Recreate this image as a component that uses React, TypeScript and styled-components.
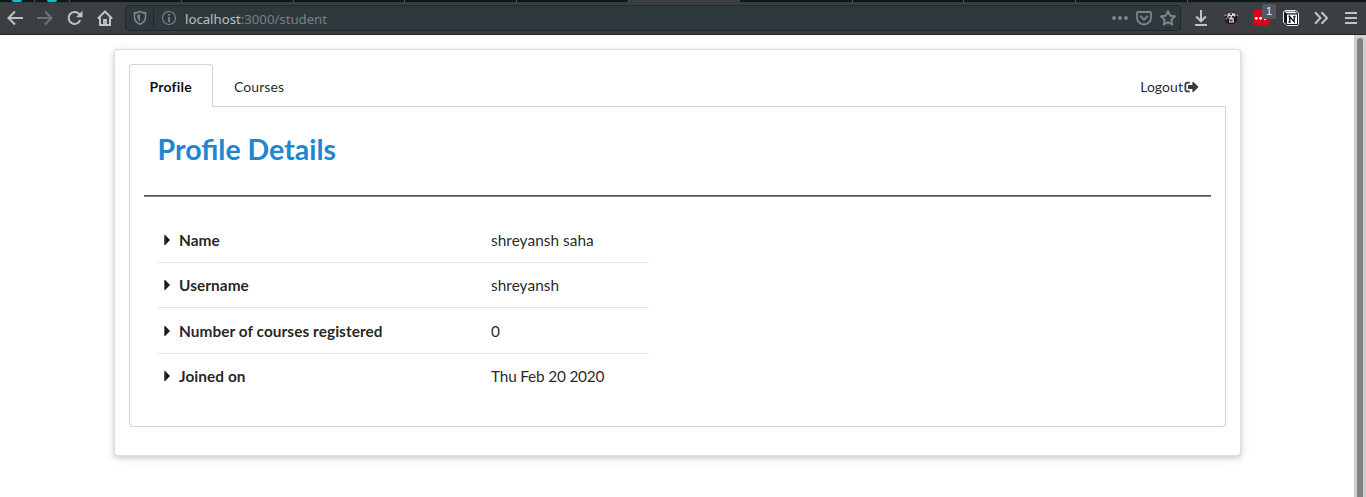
import React from 'react';
import styled, { createGlobalStyle } from 'styled-components';
import { FaSignOutAlt } from 'react-icons/fa';

const GlobalStyle = createGlobalStyle`
  *, *::before, *::after { box-sizing: border-box; }
  html, body { margin: 0; height: 100%; overflow: hidden; background: #fff; }
  body { font-family: Lato, "Liberation Sans", sans-serif; font-size: 14px; color: rgba(0, 0, 0, 0.87); }
`;

const Window = styled.div`
  display: flex;
  flex-direction: column;
  height: 497px;
`;

const TabStrip = styled.div`
  display: flex;
  height: 2px;
  flex: none;
  background: #10171a;
`;

const BrowserTab = styled.div<{ $width: number; $active?: boolean; $icon?: boolean }>`
  flex: none;
  width: ${(p) => p.$width}px;
  background: ${(p) => (p.$active ? '#3c3f41' : 'transparent')};
  border-right: 1px solid ${(p) => (p.$active ? '#3c3f41' : '#53585a')};
  display: flex;
  justify-content: center;
  &::before {
    content: '';
    display: ${(p) => (p.$icon ? 'block' : 'none')};
    width: 10px;
    height: 2px;
    border-radius: 0 0 5px 5px;
    background: #00c4cf;
  }
`;

const Toolbar = styled.div`
  display: flex;
  align-items: center;
  flex: none;
  height: 33px;
  background: #3c3f41;
  border-bottom: 1px solid #1d282b;
  box-shadow: inset 0 1px #34393b;
`;

const NavButtons = styled.div`
  display: flex;
  gap: 14px;
  width: 125px;
  padding-left: 7px;
`;

const ToolIcon = styled.svg<{ $color?: string }>`
  display: block;
  flex: none;
  fill: none;
  stroke: ${(p) => p.$color ?? '#bdc6c4'};
  stroke-width: 2;
`;

const AddressBar = styled.div`
  display: flex;
  align-items: center;
  width: 1056px;
  height: 26px;
  padding: 0 4px 0 7px;
  background: #2f393d;
  border: 1px solid #1f292b;
  border-radius: 4px;
`;

const AddressDivider = styled.span`
  width: 1px;
  height: 18px;
  margin: 0 7px 0 6px;
  background: #1e282b;
`;

const Url = styled.span`
  flex: 1;
  margin-left: 8px;
  padding-top: 2px;
  font: 13.2px/18px "Noto Sans", sans-serif;
  color: #768082;
  b { font-weight: 400; color: #b9c2c1; }
`;

const AddressActions = styled.div`
  display: flex;
  align-items: center;
  gap: 8px;
`;

const Extensions = styled.div`
  display: flex;
  align-items: center;
  gap: 14px;
  padding-left: 12px;
`;

const PasswordExtension = styled.div`
  position: relative;
  width: 16px;
  height: 16px;
`;

const Badge = styled.span`
  position: absolute;
  left: 9px;
  top: -6px;
  width: 14px;
  height: 15px;
  border-radius: 2px;
  background: #53585a;
  color: #eef;
  font: 11px/14px "Liberation Sans", sans-serif;
  text-align: center;
`;

const Viewport = styled.div`
  display: flex;
  flex: 1;
  min-height: 0;
`;

const Page = styled.main`
  flex: 1;
  padding: 14px 113px 0 114px;
`;

const Scrollbar = styled.div`
  width: 12px;
  padding: 3px 3px 0 2px;
  background: #cfcfcf;
  border-left: 1px solid #cdc7c2;
`;

const Thumb = styled.div`
  height: 100%;
  width: 6px;
  border-radius: 3px 3px 0 0;
  background: #7e8382;
`;

const Card = styled.section`
  height: 407px;
  padding: 14px;
  border: 1px solid rgba(34, 36, 38, 0.15);
  border-radius: 4px;
  background: #fff;
  box-shadow: 0 2px 4px 0 rgba(34, 36, 38, 0.12), 0 2px 10px 0 rgba(34, 36, 38, 0.15);
`;

const Menu = styled.nav`
  display: flex;
  height: 43px;
  border-bottom: 1px solid #d4d4d5;
`;

const MenuItem = styled.a<{ $active?: boolean }>`
  display: flex;
  align-items: center;
  height: 43px;
  width: ${(p) => (p.$active ? '84px' : 'auto')};
  padding: ${(p) => (p.$active ? '2px 0 0 19.5px' : '2px 21px 0')};
  line-height: 14px;
  letter-spacing: ${(p) => (p.$active ? '0.2px' : '0.08px')};
  font-variant-ligatures: common-ligatures;
  color: ${(p) => (p.$active ? 'rgba(0,0,0,.95)' : 'rgba(0,0,0,.87)')};
  font-weight: ${(p) => (p.$active ? 700 : 400)};
  border: ${(p) => (p.$active ? '1px solid #d4d4d5' : '0')};
  border-bottom: 0;
  border-radius: 4px 4px 0 0;
  background: ${(p) => (p.$active ? '#fff' : 'none')};
`;

const LogoutItem = styled(MenuItem)`
  margin-left: auto;
  padding-right: 27px;
  letter-spacing: 0.05px;
  svg { width: 15px; height: 14px; margin-left: 1px; color: #3b3b3b; }
`;

const Panel = styled.div`
  height: 320px;
  padding: 0 14px;
  border: 1px solid #d4d4d5;
  border-top: 0;
  border-radius: 0 0 4px 4px;
`;

const Title = styled.h1`
  margin: 0;
  height: 88px;
  padding: 24px 13.6px 0;
  font-size: 28.5px;
  line-height: 36px;
  font-weight: 700;
  color: #2185d0;
`;

const Rule = styled.div`
  height: 2px;
  background: linear-gradient(#555657 50%, #7d7e7e 50%);
`;

const Details = styled.dl`
  width: 491px;
  margin: 19.6px 0 0 14px;
`;

const DetailRow = styled.div`
  display: flex;
  align-items: center;
  height: 45.4px;
  font-size: 15.4px;
  line-height: 18px;
  &:first-child { padding-top: 1px; }
  & + & { border-top: 1px solid #e4e5e5; }
`;

const Caret = styled.svg`
  width: 6px;
  height: 10px;
  margin: 0 9.500px 0 5.500px;
  fill: #1b1c1d;
`;

const Label = styled.dt`
  width: 312px;
  font-weight: 700;
  letter-spacing: 0.06px;
`;

const Value = styled.dd<{ $tight?: boolean }>`
  margin: 0;
  letter-spacing: ${(p) => (p.$tight ? '-0.2px' : '0.04px')};
`;

const browserTabs: { width: number; active?: boolean; icon?: boolean }[] = [
  { width: 35, icon: true }, { width: 35, icon: true }, { width: 112 }, { width: 112 }, { width: 111 },
  { width: 112 }, { width: 112 }, { width: 111, active: true }, { width: 113 }, { width: 111 },
  { width: 112 }, { width: 112 },
];

const details: { label: string; value: string; tight?: boolean }[] = [
  { label: 'Name', value: 'shreyansh saha' },
  { label: 'Username', value: 'shreyansh' },
  { label: 'Number of courses registered', value: '0' },
  { label: 'Joined on', value: 'Thu Feb 20 2020', tight: true },
];

const dim = '#7c8587';

const BrowserChrome = () => (
  <>
    <TabStrip>
      {browserTabs.map((t, i) => <BrowserTab key={i} $width={t.width} $active={t.active} $icon={t.icon} />)}
    </TabStrip>
    <Toolbar>
      <NavButtons>
        <ToolIcon width="16" height="16"><path d="M16 8H1.5M8 1.5 1.5 8 8 14.5" /></ToolIcon>
        <ToolIcon width="16" height="16" $color="#6d7273"><path d="M0 8h14.5M8 1.5 14.5 8 8 14.5" /></ToolIcon>
        <ToolIcon width="16" height="16"><path d="M13.2 10.2A6 6 0 1 1 12 3.8L13.5 5.4" /><path d="M15.5.8v6.4H9Z" fill="#bdc6c4" stroke="none" /></ToolIcon>
        <ToolIcon width="16" height="16"><path d="M.8 8.6 8 1.5l7.2 7.1M3 7.5V15h10V7.5" /><path d="M7 15v-5h2v5" strokeWidth="1.8" /></ToolIcon>
      </NavButtons>
      <AddressBar>
        <ToolIcon width="14" height="16" $color={dim}>
          <path d="M7 1.5C5 2.6 3.2 2.9 1.5 2.9V7c0 3.4 1.7 5.7 5.5 7.3 3.8-1.6 5.5-3.9 5.5-7.3V2.9C10.8 2.9 9 2.6 7 1.5Z" strokeWidth="1.6" />
          <path d="M7 4.3v7.2C4.9 10.3 4.2 8.7 4.2 5.1 5.3 5 6.2 4.7 7 4.3Z" fill={dim} stroke="none" />
        </ToolIcon>
        <AddressDivider />
        <ToolIcon width="16" height="16" $color={dim}>
          <circle cx="8" cy="8" r="6.5" strokeWidth="1.1" /><path d="M8 7v5M8 4v1.7" strokeWidth="1.8" />
        </ToolIcon>
        <Url><b>localhost</b>:3000/student</Url>
        <AddressActions>
          <ToolIcon width="16" height="16" $color={dim}>
            <g fill={dim} stroke="none"><circle cx="2" cy="8" r="2" /><circle cx="8" cy="8" r="2" /><circle cx="14" cy="8" r="2" /></g>
          </ToolIcon>
          <ToolIcon width="16" height="16" $color={dim}>
            <path d="M2 2h12a1 1 0 0 1 1 1v4.5a7 7 0 0 1-14 0V3a1 1 0 0 1 1-1Z" strokeWidth="1.8" />
            <path d="m4.6 6.4 3.4 3.3 3.4-3.3" strokeLinecap="round" />
          </ToolIcon>
          <ToolIcon width="16" height="16" $color={dim}>
            <path d="m8 1.2 2.1 4.5 4.9.6-3.6 3.4.9 4.9L8 12.2l-4.3 2.4.9-4.9L1 6.3l4.9-.6Z" strokeWidth="1.9" strokeLinejoin="round" />
          </ToolIcon>
        </AddressActions>
      </AddressBar>
      <Extensions>
        <ToolIcon width="16" height="16"><path d="M8 0v11M3.2 6.5 8 11.3l4.8-4.8M2 15h12" /></ToolIcon>
        <ToolIcon width="16" height="16">
          <circle cx="8" cy="8" r="7" fill="#171b22" stroke="#6c2945" strokeWidth="1" />
          <path d="M5 3.2 8 2.5 12 3.5 12.5 6 10.5 8 11 12.5H6L6.5 9 4 7Z" fill="#d8d1cb" stroke="none" />
          <path d="M5.5 6.8h2M9 6.8h2.5M7 10.5h2.5M8 3v2" stroke="#20232a" strokeWidth="1.7" />
          <path d="M1 6 4 4.5M12.5 4.5l2.5 1.2M2.5 9.5 4 8" stroke="#8d9096" strokeWidth="1.2" />
        </ToolIcon>
        <PasswordExtension>
          <ToolIcon width="16" height="16">
            <rect width="16" height="16" rx="1.5" fill="#d9001b" stroke="none" />
            <g fill="#fff" stroke="none"><circle cx="3.3" cy="8.3" r="1.4" /><circle cx="7.6" cy="8.3" r="1.4" /><circle cx="12" cy="9.3" r="1" /></g>
          </ToolIcon>
          <Badge>1</Badge>
        </PasswordExtension>
        <ToolIcon width="16" height="16">
          <path d="M2 .5H12.5L15.5 3v11L14.5 15.5H4L.5 12V2Z" fill="#16191b" stroke="#eef0f0" strokeWidth="1" />
          <path d="M1 1.5h11l2.5 2H4Z" fill="#fff" stroke="none" />
          <path d="M3.5 4h11v10.5h-11Z" fill="#fff" stroke="#16191b" strokeWidth="1" />
          <path d="M6.7 12V6.5l4.5 5.3V6M5.5 6.5h2M10.3 6.5h2.2M5.5 12h2.3" stroke="#111" strokeWidth="1.3" />
        </ToolIcon>
        <ToolIcon width="16" height="16"><path d="m2 2.2 5.5 5.8L2 13.8M8.5 2.2 14 8l-5.5 5.8" /></ToolIcon>
        <ToolIcon width="16" height="16"><path d="M2 3h12M2 8h12M2 13h12" /></ToolIcon>
      </Extensions>
    </Toolbar>
  </>
);

export default function App() {
  return (
    <Window>
      <GlobalStyle />
      <BrowserChrome />
      <Viewport>
        <Page>
          <Card>
            <Menu>
              <MenuItem $active>Profile</MenuItem>
              <MenuItem>Courses</MenuItem>
              <LogoutItem>Logout<FaSignOutAlt /></LogoutItem>
            </Menu>
            <Panel>
              <Title>Profile Details</Title>
              <Rule />
              <Details>
                {details.map(({ label, value, tight }) => (
                  <DetailRow key={label}>
                    <Caret viewBox="0 0 6 10"><path d="M.3 0H1.200L6 5 1.200 10H.3Z" /></Caret>
                    <Label>{label}</Label>
                    <Value $tight={tight}>{value}</Value>
                  </DetailRow>
                ))}
              </Details>
            </Panel>
          </Card>
        </Page>
        <Scrollbar><Thumb /></Scrollbar>
      </Viewport>
    </Window>
  );
}
